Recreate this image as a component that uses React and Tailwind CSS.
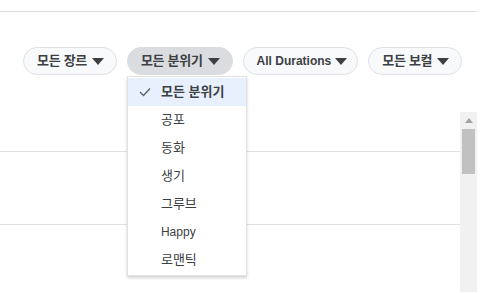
import React, { useState } from 'react';

const font = { fontFamily: '"Liberation Sans", "Noto Sans CJK KR", Arial, sans-serif' };

const filters = ['모든 장르', '모든 분위기', 'All Durations', '모든 보컬'];
const moods = ['모든 분위기', '공포', '동화', '생기', '그루브', 'Happy', '로맨틱'];

const isKo = (s) => /[\uac00-\ud7a3]/.test(s);

const Caret = () => (
    <svg width="12" height="7" viewBox="0 0 12 7" className="shrink-0">
        <path d="M0 0 L12 0 L6 7 Z" fill="#3c4043" />
    </svg>
);

const App = () => {
    const [open] = useState(1);
    const [mood, setMood] = useState('모든 분위기');

    return (
        <div className="w-[500px] h-[293px] bg-white overflow-hidden relative text-[#3c4043]" style={font}>
            <div className="w-[477px] h-[12px] border-b border-[#dadce0]"></div>

            {/* filter pills */}
            <div className="flex gap-[10px] pl-[23px] mt-[35px] relative">
                {filters.map((f, i) => (
                    <div key={f} className="relative">
                        <button
                            className={
                                'h-[28px] flex items-center pl-[13px] rounded-full font-bold border ' +
                                (isKo(f) ? 'text-[13px] tracking-[-0.3px] gap-[5px] pr-[12px] ' : 'text-[12px] gap-[4px] pr-[10px] ') +
                                (i === open ? 'bg-[#dadce0] border-[#dadce0]' : 'bg-[#f8f9fa] border-[#dfe1e5]')
                            }
                        >
                            <span>{f}</span>
                            <Caret />
                        </button>
                        {i === open && (
                            <div className="absolute left-0 top-[29px] w-[120px] bg-white border border-[#e3e3e3] shadow-[0_2px_3px_rgba(0,0,0,0.18)] py-[1px] z-10">
                                {moods.map((m) => (
                                    <div
                                        key={m}
                                        onClick={() => setMood(m)}
                                        className={
                                            'h-[28px] flex items-center ' +
                                            (isKo(m) ? 'text-[13px] ' : 'text-[12px] ') +
                                            (m === mood ? 'bg-[#e8f0fe] font-bold' : '')
                                        }
                                    >
                                        <span className="w-[33px] flex justify-center pl-[1px]">
                                            {m === mood && (
                                                <svg width="12" height="10" viewBox="0 0 12 10">
                                                    <path d="M1 5 L4.5 8.5 L11 1.5" stroke="#5f6368" strokeWidth="1.4" fill="none" />
                                                </svg>
                                            )}
                                        </span>
                                        <span>{m}</span>
                                    </div>
                                ))}
                            </div>
                        )}
                    </div>
                ))}
            </div>

            {/* list area with scrollbar */}
            <div className="flex w-[477px] mt-[37px] h-[180px]">
                <div className="flex-1">
                    <div className="h-[40px] border-b border-[#e0e0e0]"></div>
                    <div className="h-[73px] border-b border-[#e0e0e0]"></div>
                </div>
                <div className="w-[17px] bg-[#f1f1f1] flex flex-col items-center">
                    <div className="h-[17px] flex items-center justify-center">
                        <svg width="8" height="5" viewBox="0 0 8 5">
                            <path d="M0 5 L4 0 L8 5 Z" fill="#a3a3a3" />
                        </svg>
                    </div>
                    <div className="w-[13px] h-[45px] bg-[#c1c1c1]"></div>
                </div>
            </div>
        </div>
    );
};

export default App;
